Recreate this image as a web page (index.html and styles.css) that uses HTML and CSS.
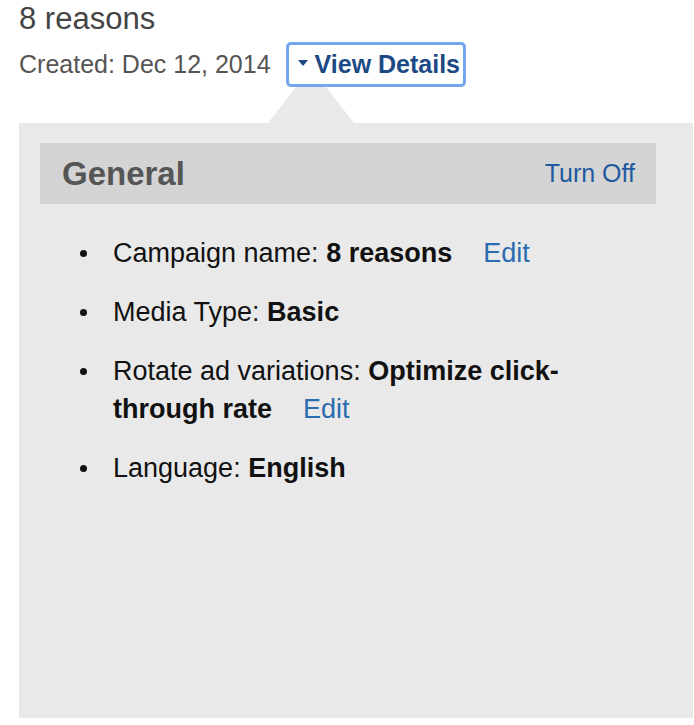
FILE: index.html
```html
<!DOCTYPE html>
<html lang="en">
<head>
<meta charset="utf-8">
<title>8 reasons</title>
<link rel="stylesheet" href="styles.css">
</head>
<body>
<h1 class="title">8 reasons</h1>
<div class="meta">
  <span class="created">Created: Dec 12, 2014</span>
  <button class="details-btn" type="button"><span class="caret"></span>View Details</button>
</div>
<section class="panel">
  <div class="panel-head">
    <h2 class="panel-title">General</h2>
    <a class="link turn-off" href="#">Turn Off</a>
  </div>
  <ul class="settings">
    <li><div>Campaign name: <b>8 reasons</b><a class="link edit" href="#">Edit</a></div></li>
    <li><div>Media Type: <b>Basic</b></div></li>
    <li><div>Rotate ad variations: <b>Optimize click-</b><b>through rate</b><a class="link edit" href="#">Edit</a></div></li>
    <li><div>Language: <b>English</b></div></li>
  </ul>
</section>
</body>
</html>
```
FILE: styles.css
```css
* { box-sizing: border-box; }
html, body { background: #fff; }
body {
  margin: 0;
  padding: 2px 1px 0 19px;
  font-family: "Liberation Sans", Helvetica, Arial, sans-serif;
  color: #111;
}
.title {
  margin: 0;
  font-size: 31px;
  font-weight: normal;
  line-height: 34px;
  color: #444;
}
.meta {
  margin-top: 6px;
  display: flex;
  align-items: center;
  gap: 15px;
  height: 45px;
}
.created {
  font-size: 25px;
  color: #555;
}
.details-btn {
  position: relative;
  z-index: 2;
  height: 45px;
  padding: 0 3px 0 9px;
  border: 3px solid #74a6ee;
  border-radius: 5px;
  background: #fff;
  font-family: inherit;
  font-size: 25px;
  font-weight: bold;
  color: #1d4a85;
  display: flex;
  align-items: center;
  gap: 7px;
}
.caret {
  width: 0;
  height: 0;
  border-left: 5px solid transparent;
  border-right: 5px solid transparent;
  border-top: 6px solid #1d4a85;
  margin-top: -3px;
}
.panel {
  position: relative;
  margin-top: 36px;
  height: 595px;
  background: #e9e9e9;
  padding-top: 20px;
}
.panel::before {
  content: "";
  position: absolute;
  top: -55px;
  left: 249px;
  width: 0;
  height: 0;
  border-left: 43px solid transparent;
  border-right: 43px solid transparent;
  border-bottom: 55px solid #e9e9e9;
}
.panel-head {
  margin: 0 37px 0 21px;
  height: 61px;
  background: #d4d4d4;
  display: flex;
  align-items: center;
  justify-content: space-between;
  padding: 0 21px 0 22px;
}
.panel-title {
  margin: 0;
  font-size: 33px;
  font-weight: bold;
  color: #555;
}
.link {
  text-decoration: none;
  color: #2b6cb0;
}
.turn-off {
  font-size: 25px;
  color: #1f5a9e;
}
.settings {
  list-style: none;
  margin: 30px 37px 0 43px;
  padding: 0;
  font-size: 27px;
  line-height: 38px;
}
.settings li {
  display: grid;
  grid-template-columns: 51px 1fr;
  margin-bottom: 21px;
}
.settings li::before {
  content: "";
  width: 7px;
  height: 7px;
  border-radius: 50%;
  background: #111;
  margin: 16px 0 0 18px;
}
.edit {
  margin-left: 31px;
}
```
